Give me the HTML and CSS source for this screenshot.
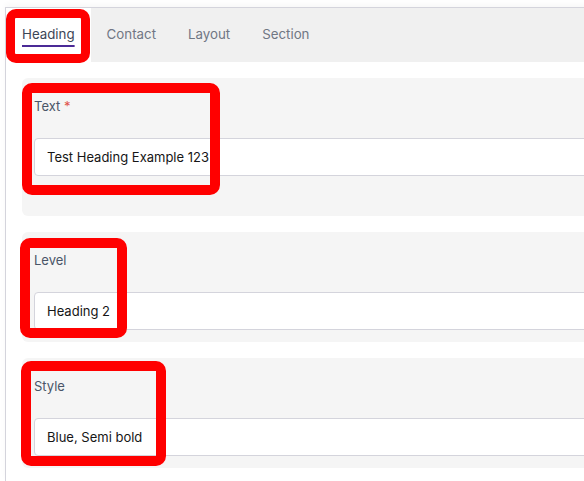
FILE: index.html
```html
<!DOCTYPE html>
<html lang="en">
<head>
    <meta charset="UTF-8">
    <meta name="viewport" content="width=device-width, initial-scale=1.0">
    <title>Block editor</title>
    <link rel="stylesheet" href="styles.css">
</head>
<body>

    <div class="page">
        <div class="editor">
            <div class="tabs">
                <button class="tab active">Heading</button>
                <button class="tab">Contact</button>
                <button class="tab">Layout</button>
                <button class="tab">Section</button>
            </div>

            <div class="fields">
                <div class="field field-tall">
                    <label class="field-label">Text <span class="required">*</span></label>
                    <input class="field-input" type="text" value="Test Heading Example 123">
                </div>
                <div class="field">
                    <label class="field-label">Level</label>
                    <input class="field-input" type="text" value="Heading 2">
                </div>
                <div class="field">
                    <label class="field-label">Style</label>
                    <input class="field-input" type="text" value="Blue, Semi bold">
                </div>
            </div>
        </div>

        <!-- highlight marks drawn over the form -->
        <span class="mark mark-tab"></span>
        <span class="mark mark-text"></span>
        <span class="mark mark-level"></span>
        <span class="mark mark-style"></span>
    </div>

</body>
</html>
```

FILE: styles.css
```css
:root {
    --line: #d4d4dc;
    --panel: #f5f5f5;
    --tabbar: #f0f0f0;
    --purple: #4b2a96;
    --label: #4a5568;
    --muted: #707784;
    --mark: #ff0000;
}
* {
    box-sizing: border-box;
}
body {
    margin: 0;
    font-family: Inter, "Noto Sans", sans-serif;
    background: #ffffff;
    overflow: hidden;
}
.page {
    position: relative;
    padding: 7px 0 0 5px;
    width: 700px;
    height: 481px;
}
.editor {
    border-top: 1px solid var(--line);
    border-left: 1px solid var(--line);
    box-shadow: 0 -3px 6px rgba(0, 0, 0, 0.03);
    height: 100%;
}
.tabs {
    display: flex;
    height: 54px;
    background: var(--tabbar);
}
.tab {
    font: inherit;
    font-size: 13.3px;
    color: var(--muted);
    background: none;
    border: none;
    padding: 0 16px 2px;
    cursor: pointer;
}
.tab.active {
    background: #ffffff;
    color: #3c4656;
    text-decoration: underline;
    text-decoration-color: var(--purple);
    text-decoration-thickness: 2px;
    text-underline-offset: 6px;
}
.fields {
    display: flex;
    flex-direction: column;
    gap: 16px;
    padding: 16px 0 0 16px;
}
.field {
    background: var(--panel);
    border-radius: 6px;
    padding: 18px 0 12px 12px;
}
.field-tall {
    padding-bottom: 40px;
}
.field-label {
    display: block;
    font-size: 13px;
    line-height: 20px;
    color: var(--label);
    margin-bottom: 22px;
}
.required {
    color: #e0524a;
}
.field-input {
    display: block;
    width: 100%;
    height: 38px;
    font: inherit;
    font-size: 13px;
    color: #161616;
    background: #ffffff;
    border: 1px solid var(--line);
    border-radius: 4px;
    padding: 0 12px;
}
.mark {
    position: absolute;
    border: 9px solid var(--mark);
    border-radius: 10px;
}
.mark-tab {
    left: 6px;
    top: 9px;
    width: 84px;
    height: 54px;
}
.mark-text {
    left: 22px;
    top: 83px;
    width: 198px;
    height: 112px;
    border-width: 10px;
}
.mark-level {
    left: 20px;
    top: 238px;
    width: 107px;
    height: 100px;
    border-width: 10px;
}
.mark-style {
    left: 21px;
    top: 361px;
    width: 145px;
    height: 105px;
    border-width: 10px;
}
```
